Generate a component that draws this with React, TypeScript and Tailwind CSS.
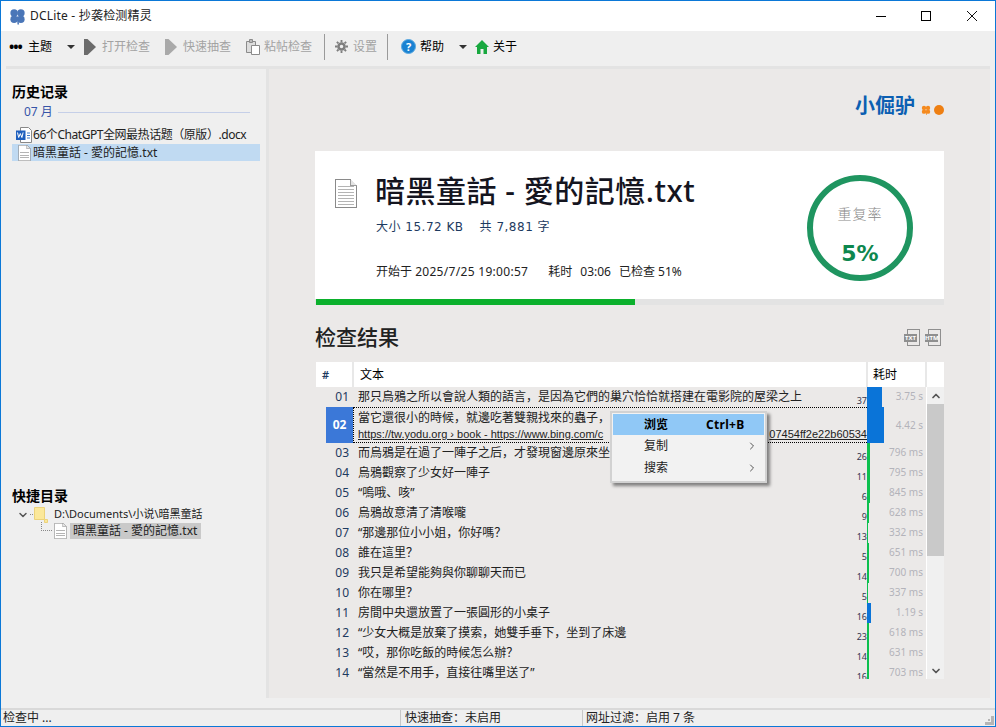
import { ChevronUp, ChevronDown, ChevronRight } from 'lucide-react'

const FONT = '[font-family:"Noto_Sans","Noto_Sans_CJK_SC",sans-serif]'

const rows = [
  { no: '01', text: '那只烏鴉之所以會說人類的語言，是因為它們的巢穴恰恰就搭建在電影院的屋梁之上', count: '37', time: '3.75 s', bar: 15, color: 'bg-[#0a74d8]' },
  { no: '03', text: '而烏鴉是在過了一陣子之后，才發現窗邊原來坐', count: '26', time: '796 ms', bar: 3, color: 'bg-[#0cc04e]' },
  { no: '04', text: '烏鴉觀察了少女好一陣子', count: '11', time: '795 ms', bar: 3, color: 'bg-[#0cc04e]' },
  { no: '05', text: '“嗚哦、咳”', count: '6', time: '845 ms', bar: 3, color: 'bg-[#0cc04e]' },
  { no: '06', text: '烏鴉故意清了清喉嚨', count: '9', time: '628 ms', bar: 2, color: 'bg-[#0cc04e]' },
  { no: '07', text: '“那邊那位小小姐，你好嗎？', count: '13', time: '332 ms', bar: 1, color: 'bg-[#0cc04e]' },
  { no: '08', text: '誰在這里？', count: '5', time: '651 ms', bar: 2, color: 'bg-[#0cc04e]' },
  { no: '09', text: '我只是希望能夠與你聊聊天而已', count: '14', time: '700 ms', bar: 2, color: 'bg-[#0cc04e]' },
  { no: '10', text: '你在哪里？', count: '5', time: '337 ms', bar: 1, color: 'bg-[#0cc04e]' },
  { no: '11', text: '房間中央還放置了一張圓形的小桌子', count: '16', time: '1.19 s', bar: 4, color: 'bg-[#0a74d8]' },
  { no: '12', text: '“少女大概是放棄了摸索，她雙手垂下，坐到了床邊', count: '23', time: '618 ms', bar: 2, color: 'bg-[#0cc04e]' },
  { no: '13', text: '“哎，那你吃飯的時候怎么辦？', count: '14', time: '631 ms', bar: 2, color: 'bg-[#0cc04e]' },
  { no: '14', text: '“當然是不用手，直接往嘴里送了”', count: '16', time: '703 ms', bar: 2, color: 'bg-[#0cc04e]' },
]

function Clover({ className, color }: { className: string; color: string }) {
  return (
    <svg viewBox="0 0 16 16" className={className} fill={color}>
      <circle cx="4.8" cy="4.6" r="3.5" />
      <circle cx="11.2" cy="4.6" r="3.5" />
      <circle cx="4.8" cy="10.6" r="3.5" />
      <circle cx="11.2" cy="10.6" r="3.5" />
      <path d="M7.5 8h1l1 7.5h-1.5z" />
    </svg>
  )
}

function Play({ color, className = 'ml-[9px]' }: { color: string; className?: string }) {
  return (
    <svg viewBox="0 0 12 16" className={`w-3 h-4 ${className}`} fill={color}>
      <path d="M0 0h3.5L12 8l-8.5 8H0z" />
    </svg>
  )
}

function Caret() {
  return <span className="w-0 h-0 border-x-[4px] border-x-transparent border-t-[4px] border-t-[#333]" />
}

function TextFile({ className }: { className: string }) {
  return (
    <svg viewBox="0 0 22 29" className={className} shapeRendering="crispEdges">
      <path d="M.5.5h15l6 6v22H.5z" fill="#fff" stroke="#8a8a8a" />
      <path d="M15.5.5v6h6" fill="#e4e4e4" stroke="#9a9a9a" />
      {[7, 10, 13, 16, 19, 22, 25].map(y => (
        <rect key={y} x="3" y={y} width="16" height="1" fill="#b4b4b4" />
      ))}
    </svg>
  )
}

function ExportIcon({ label }: { label: string }) {
  return (
    <div className="relative w-[16px] h-[17px]">
      <div className="ml-[3px] w-[13px] h-[17px] border border-[#8f8f8f] bg-[#ebe9e8]" />
      <span className="absolute left-0 w-[13px] top-[5px] h-[8px] bg-[#8f8f8f] text-white text-[6px] leading-[8px] font-bold text-center">
        {label}
      </span>
    </div>
  )
}

function Row({ no, text, count, time, bar, color }: (typeof rows)[number]) {
  return (
    <div className="grid grid-cols-[37px_514px_59px] h-5 text-xs">
      <div className="flex items-center justify-end pr-1 text-[#1d3a60]">
        <span className="leading-3">{no}</span>
      </div>
      <div className="flex justify-between pl-[5px] text-[#222]">
        <span className="self-center leading-3">{text}</span>
        <span className="self-end text-[9px] leading-[12px] text-[#33364f]">{count}</span>
      </div>
      <div className="relative pr-[3px] text-right text-[10px] leading-[19px] text-[#b3b3ba]">
        <div className={`absolute left-0 top-0 bottom-0 ${color}`} style={{ width: bar }} />
        {time}
      </div>
    </div>
  )
}

export default function App() {
  return (
    <div className={`w-[996px] h-[727px] flex flex-col overflow-hidden border border-[#0b78d7] bg-[#efefef] ${FONT}`}>
      <div className="h-[30px] shrink-0 bg-white flex items-center pl-2 text-xs text-[#222]">
        <Clover className="w-[17px] h-[17px]" color="#4a76b8" />
        <span className="ml-1 tracking-[0.2px]">DCLite - 抄袭检测精灵</span>
        <div className="ml-auto flex items-center">
          <span className="w-[10px] h-px bg-black mr-[35px]" />
          <span className="w-[10px] h-[10px] border border-black mr-[36px]" />
          <svg viewBox="0 0 10 10" className="w-[10px] h-[10px] mr-[18px]" stroke="#111">
            <path d="M0 0l10 10M10 0L0 10" />
          </svg>
        </div>
      </div>

      <div className="h-[35px] shrink-0 flex items-center pl-2 pb-1 text-xs text-black">
        <span className="text-sm leading-none font-bold tracking-[-1px] w-[19px]">•••</span>
        <span>主题</span>
        <span className="ml-[15px] flex"><Caret /></span>
        <Play color="#6b6b6b" />
        <span className="ml-[6px] text-[#a3a3a3]">打开检查</span>
        <Play color="#a9a9a9" className="ml-[15px]" />
        <span className="ml-[6px] text-[#a3a3a3]">快速抽查</span>
        <svg viewBox="0 0 14 16" className="w-[14px] h-4 ml-[15px]" fill="#fff" stroke="#8b8b8b">
          <path d="M.5 2.5h9v11h-9z" fill="#ddd" />
          <path d="M3.5.5h3v3h-3z" fill="#bbb" />
          <path d="M5.5 6.5h8v9h-8z" />
        </svg>
        <span className="ml-1 text-[#a3a3a3]">粘帖检查</span>
        <span className="ml-3 w-px h-[26px] bg-[#9a9a9a]" />
        <svg viewBox="0 0 14 14" className="w-[13px] h-[13px] ml-[10px]" fill="none" stroke="#7f7f7f">
          <circle cx="7" cy="7" r="3.3" strokeWidth="2.8" />
          <path d="M7 0v14M0 7h14M2 2l10 10M12 2L2 12" strokeWidth="2" strokeDasharray="2.4 9.2" />
        </svg>
        <span className="ml-[5px] text-[#a3a3a3]">设置</span>
        <span className="ml-[10px] w-px h-[26px] bg-[#9a9a9a]" />
        <span className="ml-[13px] w-[15px] h-[15px] rounded-full bg-[#1a82d2] border border-[#5aa8e0] text-white text-[11px] leading-[13px] font-bold text-center">?</span>
        <span className="ml-[4px]">帮助</span>
        <span className="ml-[15px] flex"><Caret /></span>
        <svg viewBox="0 0 14 14" className="w-[14px] h-[14px] ml-2" fill="#18a83f">
          <path d="M7 0l7 7h-2v7H8.5V9h-3v5H2V7H0z" />
        </svg>
        <span className="ml-1">关于</span>
      </div>

      <div className="flex-1 min-h-0 mx-[5px] mb-[10px] border-t-[3px] border-[#e3e3e3] flex">
        <aside className="w-[260px] shrink-0 pl-[6px] pr-[6px] pt-[13px] flex flex-col text-xs text-[#222]">
          <h2 className="text-sm leading-5 font-bold text-black">历史记录</h2>
          <div className="flex items-center mt-[1px] pl-3 pr-[10px] h-[18px] text-[#3654a8]">
            <span>07 月</span>
            <span className="ml-[5px] flex-1 h-px bg-[#c5cfe8]" />
          </div>
          <div className="flex items-center h-[18px] mt-[5px] pl-1">
            <svg viewBox="0 0 16 16" className="w-4 h-4 shrink-0">
              <path d="M4.5.5h8l3 3v12h-11z" fill="#fff" stroke="#888" />
              <rect x="0" y="3.5" width="9.5" height="9.5" fill="#1e5fbe" />
              <path d="M11 6h3M11 8.5h3M11 11h3" stroke="#3f78c8" />
              <path d="M1.5 5.5l1.2 5 1.6-4 1.6 4 1.2-5" fill="none" stroke="#fff" />
            </svg>
            <span className="ml-[1px] whitespace-nowrap tracking-[-0.45px]">66个ChatGPT全网最热话题（原版）.docx</span>
          </div>
          <div className="flex items-center h-[17px] bg-[#c0daf2]">
            <TextFile className="w-[13px] h-4 ml-[6px] shrink-0" />
            <span className="ml-[2px]">暗黑童話 - 愛的記憶.txt</span>
          </div>

          <h2 className="mt-[325px] text-sm leading-5 font-bold text-black">快捷目录</h2>
          <div className="flex items-center h-[17px] pl-[5px]">
            <ChevronDown className="w-3 h-3 text-[#555]" strokeWidth={3} />
            <span className="w-[3px] ml-[1px] mr-[1px] border-t border-dotted border-[#888]" />
            <svg viewBox="0 0 14 16" className="w-[14px] h-4 shrink-0" fill="#fbe89a" stroke="#ecd27a">
              <path d="M.5.5h10v12h-10zM10.5 12.5h3v3h-3z" />
            </svg>
            <span className="ml-[6px] text-[11px]">D:\Documents\小说\暗黑童話</span>
          </div>
          <div className="flex items-center h-[17px] -mt-px pl-[29px]">
            <span className="w-[11px] h-[9px] -mt-[9px] border-l border-b border-dotted border-[#888]" />
            <TextFile className="w-[13px] h-4 ml-[2px] shrink-0" />
            <span className="ml-[3px] pl-[3px] pr-[4px] bg-[#c9c9c9]">暗黑童話 - 愛的記憶.txt</span>
          </div>
        </aside>

        <main className="flex-1 min-w-0 border-l-[3px] border-[#e3e3e3] bg-[#ebe9e8] pl-[46px] pr-[46px] flex flex-col">
          <div className="h-[82px] shrink-0 flex items-start justify-end pt-[23px]">
            <span className="text-xl leading-7 font-bold text-[#0b5fb2]">小倔驴</span>
            <Clover className="w-[10px] h-[10px] ml-[6px] mt-[13px]" color="#f58a1e" />
            <span className="w-[10px] h-[10px] rounded-full bg-[#ee7f12] ml-[3px] mt-[13px]" />
          </div>

          <section className="h-[148px] shrink-0 bg-white flex pl-5 pr-[31px]">
            <TextFile className="w-[22px] h-[29px] mt-7 shrink-0" />
            <div className="ml-[18px] flex-1">
              <h1 className="mt-[18px] text-[30px] leading-[44px] font-medium tracking-[0.5px] text-[#15151f] whitespace-nowrap">暗黑童話 - 愛的記憶.txt</h1>
              <p className="mt-1 pl-px text-xs leading-5 tracking-[0.5px] text-[#1d3a60] [font-family:'DejaVu_Sans','Noto_Sans_CJK_SC',sans-serif]">大小 15.72 KB<span className="ml-4">共 7,881 字</span></p>
              <p className="mt-[25px] pl-px text-xs leading-5 text-[#222]">开始于 <span className="tracking-[0.3px]">2025/7/25 19:00:57</span><span className="ml-5">耗时</span><span className="ml-2">03:06</span><span className="ml-2">已检查 51%</span></p>
            </div>
            <div className="mt-6 w-[106px] h-[106px] shrink-0 rounded-full border-[6px] border-[#1f9560] flex flex-col items-center">
              <span className="mt-[23px] text-sm leading-5 tracking-[1px] text-[#888] font-light">重复率</span>
              <span className="mt-[18px] text-[22px] leading-6 font-bold text-[#0d874e] [font-family:'DejaVu_Sans',sans-serif]">5%</span>
            </div>
          </section>

          <div className="h-[6px] shrink-0 bg-[#e3e3e3] pl-px">
            <div className="h-full w-[319px] bg-[#0bb02c]" />
          </div>

          <div className="h-[57px] shrink-0 flex items-center justify-between pt-[9px]">
            <h2 className="text-[21px] font-medium text-[#222]">检查结果</h2>
            <div className="flex gap-[5px] mr-[3px] -mt-[1px]">
              <ExportIcon label="TXT" />
              <ExportIcon label="HTM" />
            </div>
          </div>

          <div className="ml-px relative flex-1 min-h-0 mb-[19px] flex flex-col">
            <div className="grid grid-cols-[38px_514px_59px_17px] h-[25px] shrink-0 bg-white text-xs leading-[25px] text-black">
              <div className="pl-[6px] border-r-2 border-[#e8e8e8] text-[11px] font-semibold text-[#1d3a60]">#</div>
              <div className="pl-[6px] border-r-2 border-[#e8e8e8]">文本</div>
              <div className="pl-[5px] border-r-2 border-[#e8e8e8]">耗时</div>
              <div />
            </div>

            <div className="flex-1 min-h-0 flex overflow-hidden">
              <div className="w-[610px]">
                <Row {...rows[0]} />
                <div className="grid grid-cols-[37px_514px_59px] h-[36px] text-xs">
                  <div className="ml-[10px] bg-[#3b78d8] text-white font-bold text-center leading-[36px]">02</div>
                  <div className="border-y border-l border-dotted border-black pl-[4px] text-[#222] leading-[17px] pt-px overflow-hidden">
                    <div>當它還很小的時候，就邊吃著雙親找來的蟲子，</div>
                    <div className="flex justify-between underline underline-offset-1 text-[11px] [font-family:'Liberation_Sans',sans-serif]">
                      <span>https://tw.yodu.org › book - https://www.bing.com/c</span>
                      <span>07454ff2e22b60534</span>
                    </div>
                  </div>
                  <div className="relative pr-[3px] text-right text-[10px] leading-[36px] text-[#b3b3ba]">
                    <div className="absolute left-0 top-0 bottom-0 w-[17px] bg-[#0a74d8]" />
                    4.42 s
                  </div>
                </div>
                {rows.slice(1).map(row => (
                  <Row key={row.no} {...row} />
                ))}
              </div>
              <div className="w-[18px] border-l border-white bg-[#f0f0f0] flex flex-col">
                <div className="h-[17px] flex items-center justify-center">
                  <ChevronUp className="w-3 h-3 text-[#555]" strokeWidth={3.5} />
                </div>
                <div className="h-[152px] bg-[#c9c9c9]" />
                <div className="mt-auto h-[17px] flex items-center justify-center">
                  <ChevronDown className="w-3 h-3 text-[#555]" strokeWidth={3.5} />
                </div>
              </div>
            </div>

            <div className="absolute left-[294px] top-[49px] w-[157px] h-[72px] border-2 border-[#d2d2d2] bg-[#f2f2f2] p-px shadow-[3px_3px_3px_rgba(0,0,0,0.45)] text-xs text-[#222]">
              <div className="h-[21px] bg-[#90c8f6] flex items-center pl-[31px] font-bold text-black">
                <span>浏览</span>
                <span className="ml-[38px] tracking-[0.3px]">Ctrl+B</span>
              </div>
              <div className="h-[22px] flex items-center pl-[31px] justify-between pr-[6px]">
                <span>复制</span>
                <ChevronRight className="w-3 h-3 text-[#555]" />
              </div>
              <div className="h-[22px] flex items-center pl-[31px] justify-between pr-[6px]">
                <span>搜索</span>
                <ChevronRight className="w-3 h-3 text-[#555]" />
              </div>
            </div>
          </div>
        </main>
      </div>

      <div className="h-[18px] shrink-0 border-t-2 border-[#d9d9d9] flex items-center text-xs leading-4 text-[#222]">
        <div className="w-[399px] pl-[2px]">检查中 ...</div>
        <div className="w-[182px] pl-[4px] border-l border-[#c8c8c8]">快速抽查：未启用</div>
        <div className="pl-[3px] border-l border-[#c8c8c8]">网址过滤：启用 7 条</div>
        <svg viewBox="0 0 9 9" className="ml-auto mr-[1px] mt-[5px] w-[9px] h-[9px]" fill="#b5b5b5">
          <path d="M6 0h3v3H6zM3 3h2v2H3zM6 3h3v3H6zM0 6h3v3H0zM3 6h3v3H3zM6 6h3v3H6z" />
        </svg>
      </div>
    </div>
  )
}
